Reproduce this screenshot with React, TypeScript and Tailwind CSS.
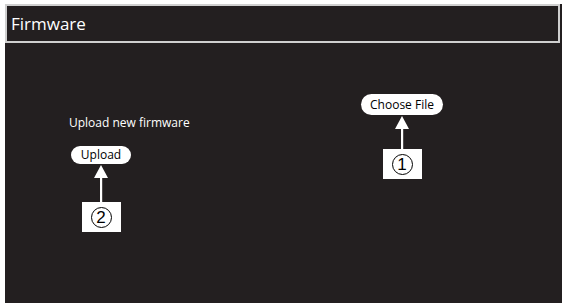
function Arrow({ h }: { h: number }) {
  return (
    <svg width="16" height={h} viewBox={`0 0 16 ${h}`} className="block">
      <polygon points="8,1 15,14 1,14" fill="#ffffff" />
      <rect x="7" y="13" width="2.2" height={h - 13} fill="#ffffff" />
    </svg>
  )
}

// circled digit drawn as a ring with the number inside
function Callout({ n }: { n: string }) {
  return (
    <div className="w-[39px] h-[30px] bg-white flex items-center justify-center">
      <span className="w-[21px] h-[21px] rounded-full border-[1.3px] border-black flex items-center justify-center text-black text-[17px] leading-none font-['Liberation_Sans',sans-serif]">
        {n}
      </span>
    </div>
  )
}

export default function App() {
  return (
    <div className="w-[562px] h-[303px] bg-white pl-[5px] pt-[4px] overflow-hidden font-['Open_Sans',sans-serif]">
      <div className="w-full h-full bg-[#231f20] flex flex-col">
        {/* Header */}
        <div className="mr-[2px] h-[39px] border-2 border-[#cfcfcf] flex items-center pl-[4px] pb-[1px]">
          <span className="text-white text-[17px] leading-none">Firmware</span>
        </div>

        <div className="flex flex-1">
          {/* Upload */}
          <div className="ml-[64px] mt-[73px] flex flex-col">
            <p className="text-white text-[12px] leading-[14px]">Upload new firmware</p>
            <div className="w-[60px] ml-[2px] mt-[16px] flex flex-col items-center">
              <button className="w-[60px] h-[18px] rounded-full bg-white text-black text-[12px] leading-none flex items-center justify-center">
                Upload
              </button>
              <Arrow h={38} />
              <Callout n="2" />
            </div>
          </div>

          {/* Choose File */}
          <div className="ml-auto mr-[119px] mt-[51px] w-[82px] flex flex-col items-center">
            <button className="w-[82px] h-[21px] rounded-full bg-white text-black text-[12px] leading-none flex items-center justify-center">
              Choose File
            </button>
            <Arrow h={34} />
            <Callout n="1" />
          </div>
        </div>
      </div>
    </div>
  )
}
